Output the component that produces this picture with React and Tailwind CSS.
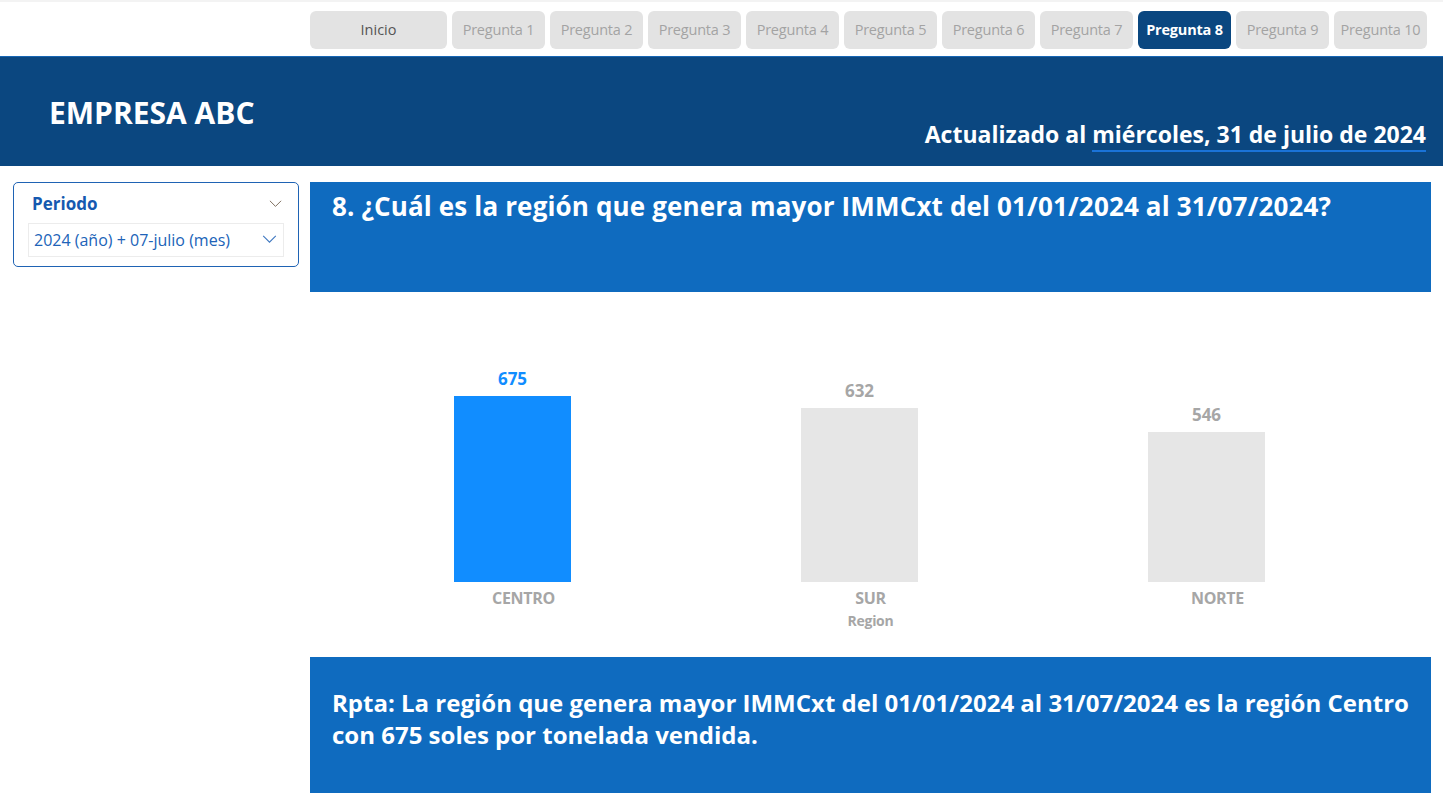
import React from "react";

const tabs = ["Pregunta 1", "Pregunta 2", "Pregunta 3", "Pregunta 4", "Pregunta 5", "Pregunta 6", "Pregunta 7", "Pregunta 8", "Pregunta 9", "Pregunta 10"];

const data = [
  { region: "CENTRO", value: 675, top: true },
  { region: "SUR", value: 632 },
  { region: "NORTE", value: 546 },
];

function Chevron({ className }) {
  return (
    <svg viewBox="0 0 16 10" className={className} fill="none" stroke="currentColor" strokeWidth="1.2">
      <path d="M1 1l7 7 7-7" />
    </svg>
  );
}

export default function App() {
  return (
    <div className="w-[1443px] h-[809px] bg-white overflow-hidden" style={{ fontFamily: "'Open Sans', 'Noto Sans', sans-serif" }}>
      {/* Navigation */}
      <div className="h-[56px] border-t-2 border-[#f3f3f3] flex items-start pt-[9px] pl-[310px] gap-[5px]">
        <div className="w-[137px] h-[38px] rounded-md bg-[#e3e3e3] text-[#555] text-[14.5px] flex items-center justify-center">Inicio</div>
        {tabs.map((t) => (
          <div
            key={t}
            className={`w-[93px] h-[38px] rounded-md text-[14.5px] flex items-center justify-center tracking-[-0.2px] ${
              t === "Pregunta 8" ? "bg-[#0a4780] text-white font-bold" : "bg-[#e3e3e3] text-[#a3a3a3]"
            }`}
          >
            {t}
          </div>
        ))}
      </div>

      {/* Header */}
      <div className="h-[110px] bg-[#0b4780] border-t border-[#1766b4] relative">
        <div className="absolute left-[49px] top-[33px] text-white font-bold text-[30px]">EMPRESA ABC</div>
        <div className="absolute right-[17px] top-[60px] text-white font-bold text-[23px]">
          Actualizado al <span className="border-b-2 border-[#1a73d8]">miércoles, 31 de julio de 2024</span>
        </div>
      </div>

      {/* Body */}
      <div className="flex pt-[16px]">
        <div className="w-[310px] pl-[13px] pr-[11px]">
          <div className="h-[85px] border border-[#1f63b4] rounded-[5px] px-[14px] pt-[8px]">
            <div className="flex items-center justify-between pl-[4px] pr-[2px]">
              <span className="text-[#1559b0] font-bold text-[17px]">Periodo</span>
              <Chevron className="w-[13px] h-[8px] text-[#7a6a5a]" />
            </div>
            <div className="mt-[6px] h-[34px] border border-[#ececec] flex items-center justify-between pl-[5px] pr-[6px]">
              <span className="text-[#2063b8] text-[16px]">2024 (año) + 07-julio (mes)</span>
              <Chevron className="w-[15px] h-[9px] text-[#3f78c0]" />
            </div>
          </div>
        </div>

        <div className="w-[1121px] flex flex-col">
          <div className="h-[110px] bg-[#0f6bbf] px-[22px] pt-[5px]">
            <div className="text-white font-bold text-[26px] tracking-[0.15px]">
              8. ¿Cuál es la región que genera mayor IMMCxt del 01/01/2024 al 31/07/2024?
            </div>
          </div>

          {/* Chart */}
          <div className="h-[365px] pl-[29px] flex flex-col">
            <div className="h-[290px] flex items-end">
              {data.map((d) => (
                <div key={d.region} className="w-[347px] flex flex-col items-center">
                  <span className={`font-bold text-[17px] mb-[5px] ${d.top ? "text-[#118dff]" : "text-[#a6a6a6]"}`}>{d.value}</span>
                  <div
                    className={`w-[117px] ${d.top ? "bg-[#118dff]" : "bg-[#e6e6e6]"}`}
                    style={{ height: `${Math.round(d.value * 0.2756)}px` }}
                  />
                </div>
              ))}
            </div>
            <div className="flex pl-[11px]">
              {data.map((d) => (
                <div key={d.region} className="w-[347px] text-center text-[#a6a6a6] font-bold text-[16px] pt-[4px] tracking-[-0.3px]">
                  {d.region}
                </div>
              ))}
            </div>
            <div className="w-[1041px] pl-[22px] text-center text-[#a6a6a6] font-bold text-[14px] tracking-[-0.3px]">Region</div>
          </div>

          <div className="h-[136px] bg-[#0f6bbf] px-[22px] pt-[30px]">
            <div className="text-white font-bold text-[24px] leading-[32px]">
              Rpta: La región que genera mayor IMMCxt del 01/01/2024 al 31/07/2024 es la región Centro
              <br />
              con 675 soles por tonelada vendida.
            </div>
          </div>
        </div>
      </div>
    </div>
  );
}
